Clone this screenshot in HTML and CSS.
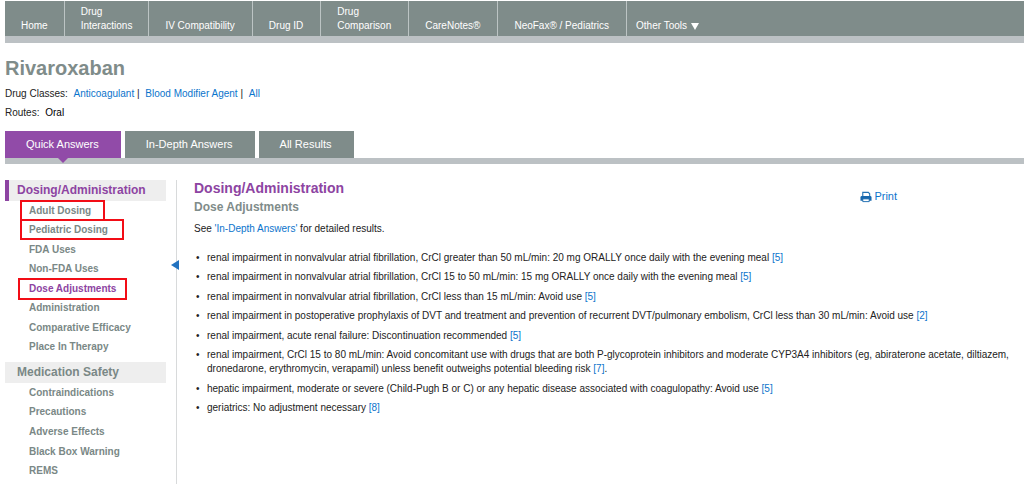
FILE: index.html
```
<!DOCTYPE html>
<html lang="en">
<head>
<meta charset="utf-8">
<title>Rivaroxaban</title>
<link rel="stylesheet" href="styles.css">
</head>
<body>
<nav class="topnav" aria-label="Main">
  <a href="#">Home</a>
  <a href="#">Drug<br>Interactions</a>
  <a href="#">IV Compatibility</a>
  <a href="#">Drug ID</a>
  <a href="#">Drug<br>Comparison</a>
  <a href="#">CareNotes®</a>
  <a href="#">NeoFax® / Pediatrics</a>
  <button type="button" class="tools">Other Tools <svg width="8" height="7" viewBox="0 0 8 7" aria-hidden="true"><path d="M0 0h8L4 7z" fill="#fff"/></svg></button>
</nav>
<header class="drug">
  <h1>Rivaroxaban</h1>
  <p class="facts">Drug Classes: <span class="classes"><a href="#">Anticoagulant</a> | <a class="next" href="#">Blood Modifier Agent</a> | <a class="next" href="#">All</a></span></p>
  <p class="facts">Routes: <span class="route">Oral</span></p>
</header>
<div class="tabs">
  <button type="button" class="tab active">Quick Answers</button>
  <button type="button" class="tab">In-Depth Answers</button>
  <button type="button" class="tab">All Results</button>
</div>
<div class="columns">
  <aside class="sidebar">
    <h2 class="current">Dosing/Administration</h2>
    <ul class="dosing">
      <li><a class="marked" href="#">Adult Dosing</a></li>
      <li><a class="marked wide" href="#">Pediatric Dosing</a></li>
      <li><a href="#">FDA Uses</a></li>
      <li><a href="#">Non-FDA Uses</a></li>
      <li><a class="marked selected" href="#">Dose Adjustments</a></li>
      <li><a href="#">Administration</a></li>
      <li><a href="#">Comparative Efficacy</a></li>
      <li><a href="#">Place In Therapy</a></li>
    </ul>
    <h2>Medication Safety</h2>
    <ul class="safety">
      <li><a href="#">Contraindications</a></li>
      <li><a href="#">Precautions</a></li>
      <li><a href="#">Adverse Effects</a></li>
      <li><a href="#">Black Box Warning</a></li>
      <li><a href="#">REMS</a></li>
    </ul>
  </aside>
  <div class="divider">
    <button type="button" class="collapse" aria-label="Collapse sidebar"><svg width="8" height="10" viewBox="0 0 8 10" aria-hidden="true"><path d="M8 0v10L0 5z" fill="#2272c0"/></svg></button>
  </div>
  <main>
    <div class="heading">
      <div>
        <h2 class="title">Dosing/Administration</h2>
        <h3>Dose Adjustments</h3>
      </div>
      <a class="print" href="#"><svg width="12" height="12" viewBox="0 0 13 12" aria-hidden="true"><path d="M3 5V1h6l1.500 1.500V5" fill="#fff" stroke="#2272b4" stroke-width="1.200"/><path d="M2 5h9q1.500 0 1.500 1.500V10h-12V6.500Q.5 5 2 5z" fill="#1768ae"/><path d="M3 8h7v3H3z" fill="#fff" stroke="#1768ae"/></svg>Print</a>
    </div>
    <p class="see">See <a href="#">'In-Depth Answers'</a> for detailed results.</p>
    <ul class="results">
      <li>renal impairment in nonvalvular atrial fibrillation, CrCl greater than 50 mL/min: 20 mg ORALLY once daily with the evening meal <a href="#">[5]</a></li>
      <li>renal impairment in nonvalvular atrial fibrillation, CrCl 15 to 50 mL/min: 15 mg ORALLY once daily with the evening meal <a href="#">[5]</a></li>
      <li>renal impairment in nonvalvular atrial fibrillation, CrCl less than 15 mL/min: Avoid use <a href="#">[5]</a></li>
      <li>renal impairment in postoperative prophylaxis of DVT and treatment and prevention of recurrent DVT/pulmonary embolism, CrCl less than 30 mL/min: Avoid use <a href="#">[2]</a></li>
      <li>renal impairment, acute renal failure: Discontinuation recommended <a href="#">[5]</a></li>
      <li>renal impairment, CrCl 15 to 80 mL/min: Avoid concomitant use with drugs that are both P-glycoprotein inhibitors and moderate CYP3A4 inhibitors (eg, abiraterone acetate, diltiazem, dronedarone, erythromycin, verapamil) unless benefit outweighs potential bleeding risk <a href="#">[7]</a>.</li>
      <li>hepatic impairment, moderate or severe (Child-Pugh B or C) or any hepatic disease associated with coagulopathy: Avoid use <a href="#">[5]</a></li>
      <li>geriatrics: No adjustment necessary <a href="#">[8]</a></li>
    </ul>
  </main>
</div>
</body>
</html>
```
FILE: styles.css
```
* { box-sizing: border-box; }
body {
  margin: 0;
  padding: 1px 0 0 5px;
  background: #fff;
  color: #222;
  font: 10px/14px "Liberation Sans", Arial, sans-serif;
}
h1, h2, h3, p, ul { margin: 0; padding: 0; }
ul { list-style: none; }
a { color: #0b74cc; text-decoration: none; }
button { font: inherit; border: 0; padding: 0; cursor: pointer; }

.topnav {
  display: flex;
  background: #7f8c8a;
  border-bottom: 7px solid #bcc1c4;
}
.topnav a {
  align-content: end;
  padding: 4px 16px 3px;
  border-right: 1px solid #bcc4c4;
  color: #fff;
  white-space: nowrap;
}
.topnav a:nth-child(n + 3) { padding-right: 17px; }
.topnav .tools {
  display: flex;
  align-items: flex-end;
  gap: 4px;
  padding: 3px 9px;
  background: none;
  color: #fff;
  white-space: nowrap;
}
.tools svg { margin-bottom: 3px; }

.drug { padding-top: 13px; }
h1 { color: #7f8c8a; font-size: 20px; line-height: 24px; }
.facts { padding-top: 5px; }
.facts:first-of-type { padding-top: 7px; }
.classes, .next, .route { margin-left: 3px; }
.route { color: #000; }

.tabs {
  display: flex;
  gap: 4px;
  margin-top: 11px;
  border-bottom: 6px solid #bcc1c4;
  font-size: 11px;
}
.tab {
  position: relative;
  padding: 6px 22px 7px 21px;
  background: #7f8c8a;
  color: #fff;
}
.tab.active { background: #914ba8; }
.tab.active::after {
  content: "";
  position: absolute;
  top: 100%;
  left: 50%;
  margin-left: -5px;
  border: 5px solid transparent;
  border-top-color: #914ba8;
  border-bottom: 0;
}

.columns {
  display: grid;
  grid-template-columns: 161px 11px 1fr;
  padding-top: 16px;
}
.sidebar { padding-bottom: 3px; }
.sidebar h2 {
  padding-left: 12px;
  background: #eee;
  color: #7a8886;
  font-size: 12px;
  line-height: 21px;
}
.sidebar h2.current {
  padding-left: 8px;
  border-left: 4px solid #8d44a2;
  color: #8d44a2;
}
.sidebar ul { display: grid; grid-auto-rows: 1fr; padding-left: 24px; }
.dosing { min-height: 156px; margin-bottom: 5px; }
.safety { min-height: 98px; }
.sidebar li { display: flex; align-items: center; }
.sidebar li a { position: relative; color: #7a8886; font-weight: bold; }
.sidebar li a.selected { color: #8d44a2; }
.marked::before {
  content: "";
  position: absolute;
  inset: -4px -14px -3px -9px;
  border: 2px solid #f20d16;
}
.marked.wide::before { right: -16px; }
.marked.selected::before { inset: -4px -11px -4px -11px; }

.divider {
  position: relative;
  border-right: 1px solid #d8dadb;
}
.collapse {
  position: absolute;
  top: 80px;
  right: -3px;
  background: none;
  line-height: 0;
}

main { padding-left: 17px; }
.heading { display: flex; justify-content: space-between; }
.title { color: #8d44a2; font-size: 14px; line-height: 17px; }
h3 { color: #7f8c8a; font-size: 12px; line-height: 20px; }
.print {
  display: flex;
  gap: 2px;
  align-self: flex-start;
  padding-top: 9px;
  margin-right: 127px;
  font-size: 11px;
}
.print svg { margin-top: 2px; }
.see { padding-top: 5px; }
.results {
  display: grid;
  align-content: space-between;
  min-height: 164px;
  margin-top: 15px;
}
.results li { position: relative; padding-left: 13px; }
.results li::before {
  content: "•";
  position: absolute;
  left: 2px;
}
```
